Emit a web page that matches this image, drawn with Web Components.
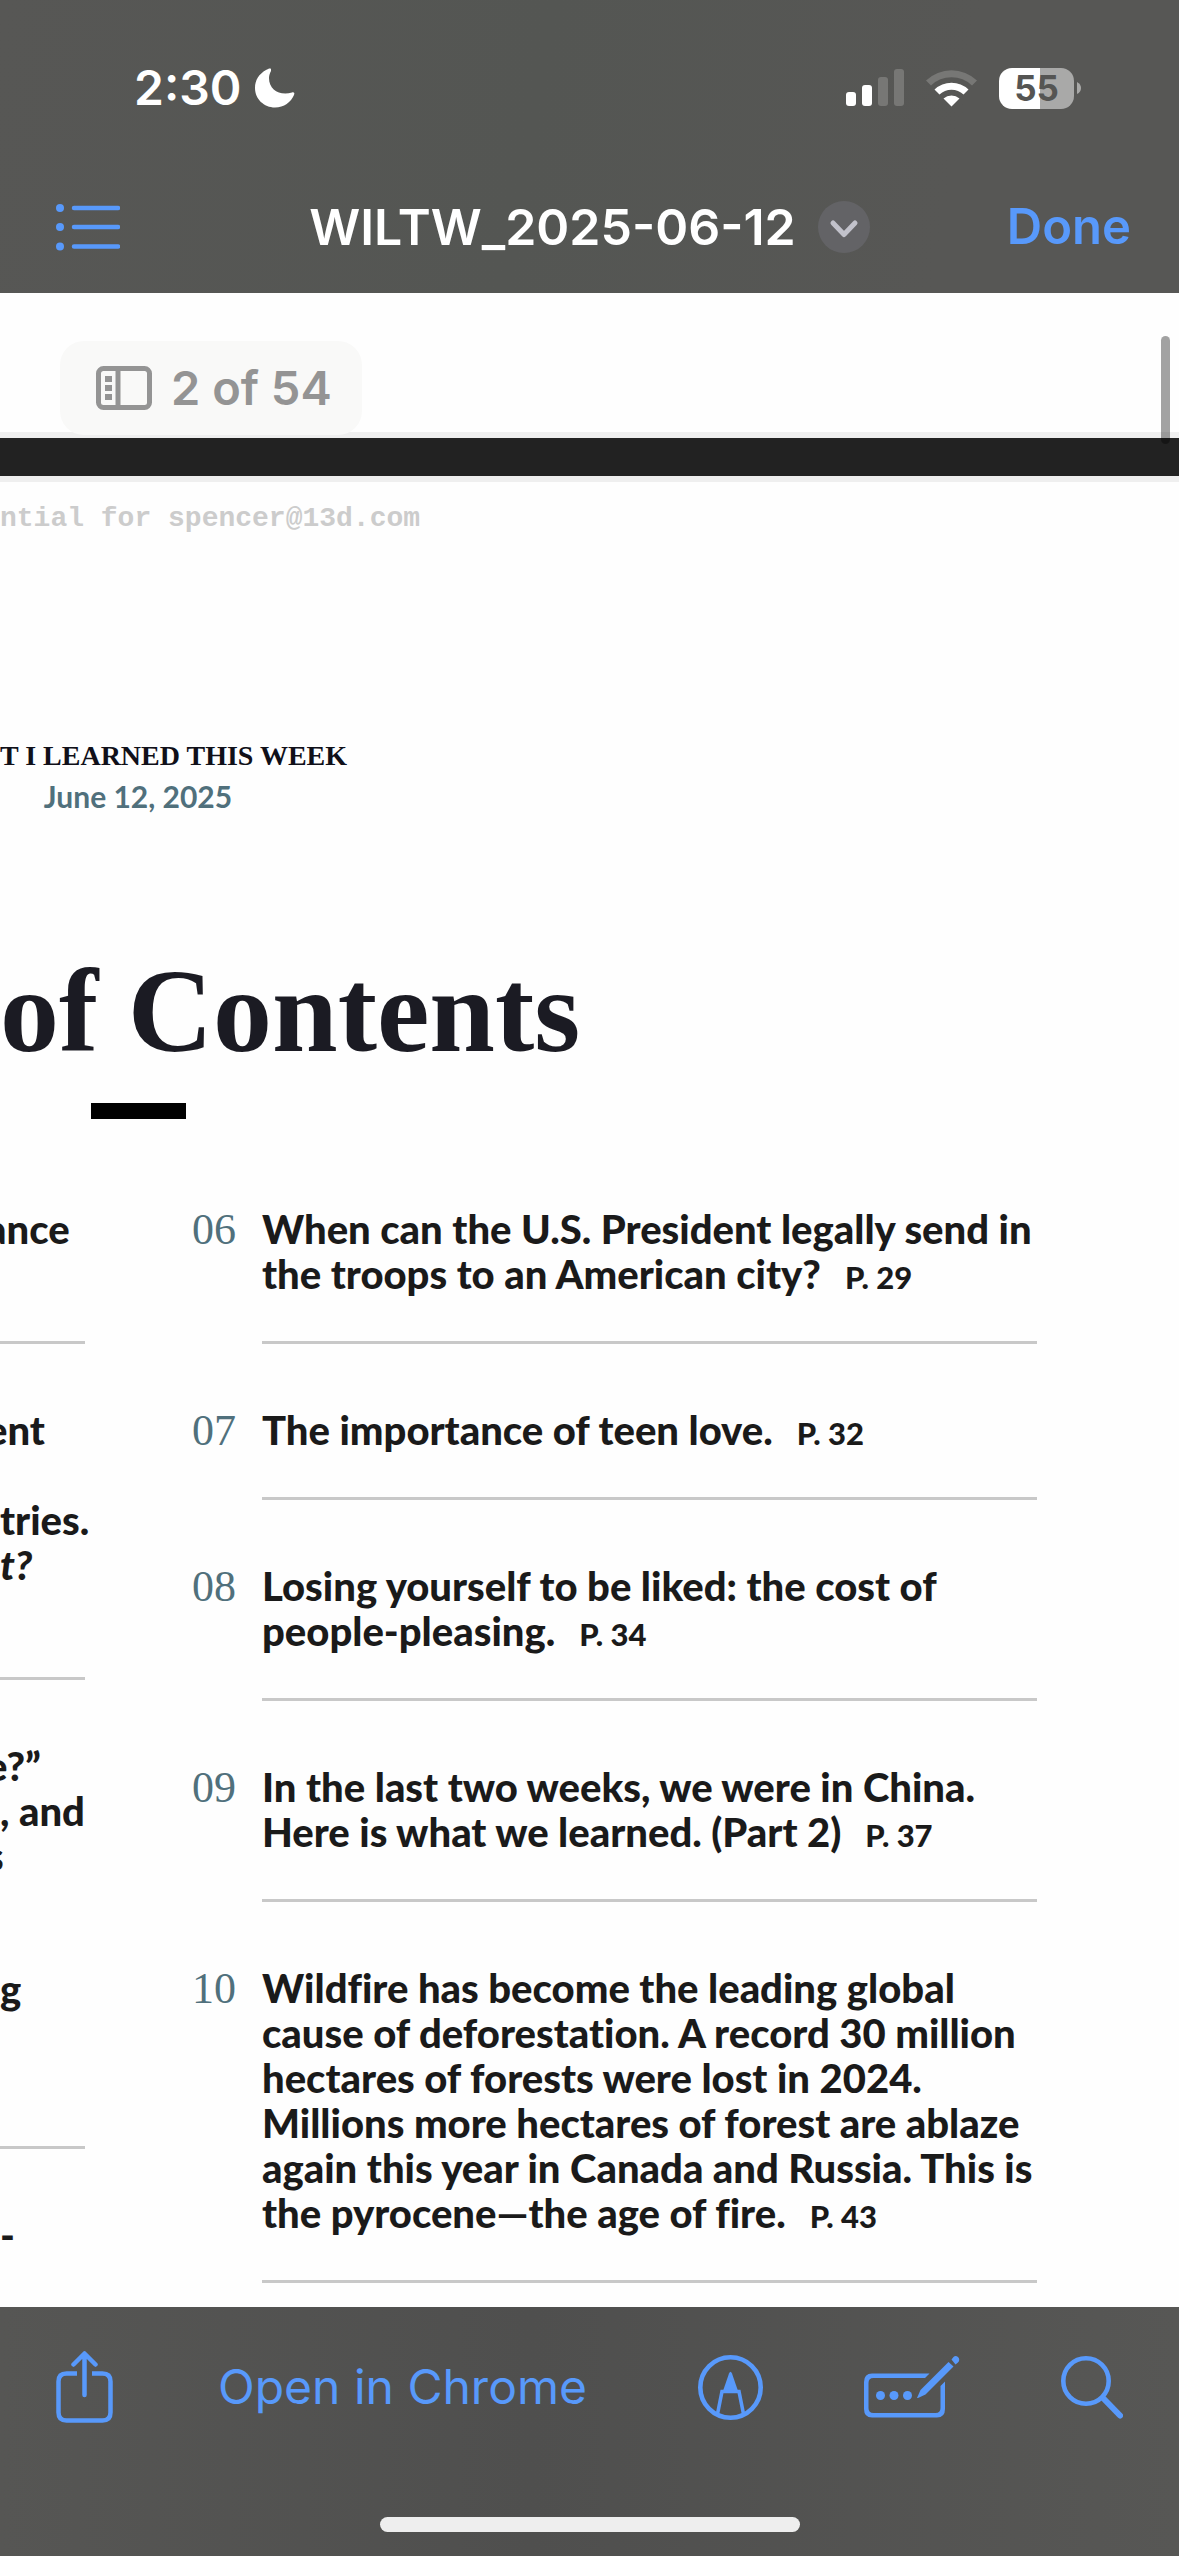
<!DOCTYPE html>
<html lang="en">
<head>
<meta charset="utf-8">
<meta name="viewport" content="width=device-width">
<title>WILTW_2025-06-12</title>
<style>
  html, body { margin: 0; height: 100%; }
  body { font-family: Inter, "Liberation Sans", sans-serif; background: #fff; --tint: #5899fb; }
</style>
</head>
<body>
<pdf-viewer>
  <status-bar slot="top"></status-bar>
  <title-bar slot="top" name="WILTW_2025-06-12"></title-bar>
  <page-badge slot="overlay">2 of 54</page-badge>
  <contents-page>
    <span slot="watermark">ntial for spencer@13d.com</span>
    <span slot="running">T I LEARNED THIS WEEK</span>
    <span slot="date">June 12, 2025</span>
    <span slot="heading">of Contents</span>

    <toc-entry slot="left"><toc-line cut>ance</toc-line><toc-line></toc-line></toc-entry>
    <toc-entry slot="left"><toc-line cut>ent</toc-line><toc-line></toc-line><toc-line>tries.</toc-line><toc-line><i>t?</i></toc-line><toc-line></toc-line></toc-entry>
    <toc-entry slot="left" open><toc-line cut>e?”</toc-line><toc-line>, and</toc-line><toc-line cut>s</toc-line></toc-entry>
    <toc-entry slot="left"><toc-line>g</toc-line><toc-line></toc-line><toc-line></toc-line></toc-entry>
    <toc-entry slot="left"><toc-line>-</toc-line><toc-line></toc-line></toc-entry>

    <toc-entry slot="right" number="06" page="P. 29">When can the U.S. President legally send in<br>the troops to an American city?</toc-entry>
    <toc-entry slot="right" number="07" page="P. 32">The importance of teen love.</toc-entry>
    <toc-entry slot="right" number="08" page="P. 34">Losing yourself to be liked: the cost of<br>people-pleasing.</toc-entry>
    <toc-entry slot="right" number="09" page="P. 37">In the last two weeks, we were in China.<br>Here is what we learned. (Part 2)</toc-entry>
    <toc-entry slot="right" number="10" page="P. 43">Wildfire has become the leading global<br>cause of deforestation. A record 30 million<br>hectares of forests were lost in 2024.<br>Millions more hectares of forest are ablaze<br>again this year in Canada and Russia. This is<br>the pyrocene—the age of fire.</toc-entry>
  </contents-page>
  <tool-bar slot="bottom"></tool-bar>
</pdf-viewer>

<script>
const define = (name, html, setup) => {
  const template = document.createElement('template');
  template.innerHTML = html;
  customElements.define(name, class extends HTMLElement {
    constructor() {
      super();
      this.attachShadow({ mode: 'open' }).append(template.content.cloneNode(true));
    }
    connectedCallback() { if (setup) setup(this, this.shadowRoot); }
  });
};

const buttonReset = `button { appearance: none; border: 0; padding: 0; margin: 0; background: none;
  font: inherit; color: inherit; display: flex; align-items: center; } svg { display: block; }`;

define('pdf-viewer', `
  <style>
    :host { display: flex; flex-direction: column; height: 100vh; overflow: hidden; }
    header { background: linear-gradient(100deg, #575755, #545653 45%, #575755 80%); height: 293px; flex: none; }
    main { position: relative; flex: 1; min-height: 0; overflow: hidden; background: #222; }
    .previous { height: 139px; background: #fefefe; border-bottom: 6px solid #efefef; margin-bottom: 38px; }
    .overlay { position: absolute; left: 60px; top: 48px; }
    .scroll { position: absolute; right: 9px; top: 43px; width: 9px; height: 108px; border-radius: 5px; background: rgba(0,0,0,.36); }
    footer { flex: none; height: 249px; background: linear-gradient(90deg, #565654, #4f4f4e 45%, #575755); }
  </style>
  <header><slot name="top"></slot></header>
  <main>
    <div class="previous"></div>
    <slot></slot>
    <div class="overlay"><slot name="overlay"></slot></div>
    <div class="scroll"></div>
  </main>
  <footer><slot name="bottom"></slot></footer>`);

define('status-bar', `
  <style>
    :host { display: flex; justify-content: space-between; align-items: center; height: 56px; padding: 60px 98px 60px 134px; color: #fff; }
    .left, .right { display: flex; align-items: center; }
    .left { gap: 14px; font-size: 48px; font-weight: 600; line-height: 56px; }
    .right { gap: 22px; }
    svg { display: block; }
    .cell { display: flex; align-items: center; gap: 3px; }
    .battery { width: 75px; height: 41px; border-radius: 13px; display: flex; align-items: center; justify-content: center;
      background: linear-gradient(90deg, #fff 55%, #a9a9a8 55%); color: #555553; font-size: 35px; font-weight: 700; line-height: 41px; }
  </style>
  <div class="left"><span>2:30</span>
    <svg width="40" height="40" viewBox="0 0 40 40"><path d="M16 1C15 0 13 1 11 2C4 6 0 12 0 20C0 31 9 39.500 20 39.500C29 39.500 36 34 39 27C40 25 39 24 37 24.500C25 28 14 22 14 10C14 7 15 5 16 3Z" fill="#fff"/></svg>
  </div>
  <div class="right">
    <svg width="58" height="38" viewBox="0 0 58 38"><g fill="#fff"><rect y="23" width="10" height="14" rx="3"/><rect x="16" y="16" width="10" height="21" rx="3"/></g><g fill="#777775"><rect x="32" y="8" width="10" height="29" rx="3"/><rect x="48" width="10" height="37" rx="3"/></g></svg>
    <svg width="51" height="38" viewBox="0 0 51 38"><path d="M0 11.500A37 37 0 0 1 51 11.500L46 16.500A29.500 29.500 0 0 0 5 16.500Z" fill="#777775"/><path d="M8.500 20.500A25 25 0 0 1 42.500 20.500L37.500 25.500A17.500 17.500 0 0 0 13.500 25.500ZM17.500 29.500A12.500 12.500 0 0 1 33.500 29.500L25.500 37.500Z" fill="#fff"/></svg>
    <div class="cell"><div class="battery">55</div><svg width="4" height="14" viewBox="0 0 4 14"><path d="M0 1Q4 3 4 7T0 13Z" fill="#a9a9a8"/></svg></div>
  </div>`);

define('title-bar', `
  <style>${buttonReset}
    :host { display: grid; grid-template-columns: 1fr auto 1fr; align-items: center; height: 60px; margin-top: 21px; padding: 0 48px; font-size: 50px; font-weight: 600; line-height: 60px; color: #fff; }
    .outline { padding-left: 8px; }
    .title { gap: 22px; }
    .done { justify-self: end; color: var(--tint); font-size: 49px; }
  </style>
  <button class="outline" aria-label="Table of contents"><svg width="64" height="48" viewBox="0 0 64 48"><g fill="#5899fb"><circle cx="4" cy="5" r="4"/><circle cx="4" cy="24" r="4"/><circle cx="4" cy="43.500" r="4"/></g><path d="M18 5H62M18 24H62M18 43.500H62" stroke="#5899fb" stroke-width="4.500" stroke-linecap="round"/></svg></button>
  <button class="title"><span></span><svg width="52" height="52" viewBox="0 0 52 52"><circle cx="26" cy="26" r="26" fill="#636366"/><path d="M15 22L26 33.500L37 22" fill="none" stroke="#c2c2cb" stroke-width="5" stroke-linecap="round" stroke-linejoin="round"/></svg></button>
  <button class="done">Done</button>`,
  (host, root) => { root.querySelector('.title span').textContent = host.getAttribute('name'); });

define('page-badge', `
  <style>${buttonReset}
    :host { display: block; }
    button { height: 94px; padding: 0 30px 0 36px; gap: 19px; border-radius: 24px; background: #f9f9f8; color: #949494; font-size: 47px; font-weight: 600; line-height: 60px; }
  </style>
  <button><svg width="56" height="44" viewBox="0 0 56 44" fill="none" stroke="#949494" stroke-width="5"><rect x="2.500" y="2.500" width="51" height="39" rx="5"/><path d="M22 2V42"/><path d="M9 13H16M9 22H16M9 31H16" stroke-width="6"/></svg><span><slot></slot></span></button>`);

define('contents-page', `
  <style>
    :host { display: block; background: #fefefe; border-top: 6px solid #efefef; padding-top: 20px; height: 1900px; white-space: nowrap; }
    .watermark { font: bold 28px/33px "Liberation Mono", monospace; color: #ccc; }
    .running { margin-top: 205px; font: bold 28px/32px "Liberation Serif", serif; color: #101019; }
    .center { width: 276px; display: flex; flex-direction: column; align-items: center; }
    .date { margin-top: 6px; font: bold 30px/36px Lato, sans-serif; color: #50707c; }
    h1 { margin: 132px 0 25px; font: bold 118px/132px "Liberation Serif", serif; color: #1b1b23; }
    .bar { width: 95px; height: 16px; background: #000; }
    .columns { display: grid; grid-template-columns: 85px 1fr; column-gap: 107px; margin: 88px 142px 0 0; }
    .columns > div { display: flex; flex-direction: column; min-width: 0; }
  </style>
  <div class="watermark"><slot name="watermark"></slot></div>
  <div class="running"><slot name="running"></slot></div>
  <div class="center date"><slot name="date"></slot></div>
  <h1><slot name="heading"></slot></h1>
  <div class="center"><div class="bar"></div></div>
  <div class="columns">
    <div class="left"><slot name="left"></slot></div>
    <div><slot name="right"></slot></div>
  </div>`);

define('toc-line', `
  <style>
    :host { display: block; height: 45px; }
    :host([cut]) { text-indent: -14px; }
  </style><slot></slot>`);

define('toc-entry', `
  <style>
    :host { display: flex; margin-bottom: 64px; font: 900 40px/45px Lato, sans-serif; font-variant-ligatures: none; color: #1a1a1a; }
    :host([open]) { margin-bottom: 44px; }
    :host([open]) .body { border: 0; }
    .number { width: 70px; flex: none; font: 44px/45px "Liberation Serif", serif; color: #50707c; }
    .number:empty { display: none; }
    .body { flex: 1; min-width: 0; padding-bottom: 44px; border-bottom: 3px solid #c8c8c8; }
    .page { margin-left: 24px; font-size: 31px; line-height: 30px; }
    .page:empty { display: none; }
  </style>
  <div class="number"></div><div class="body"><slot></slot><span class="page"></span></div>`,
  (host, root) => {
    root.querySelector('.number').textContent = host.getAttribute('number') || '';
    root.querySelector('.page').textContent = host.getAttribute('page') || '';
  });

define('tool-bar', `
  <style>${buttonReset}
    :host { display: flex; flex-direction: column; justify-content: space-between; align-items: center; height: 225px; padding-bottom: 24px; color: var(--tint); }
    nav { align-self: stretch; display: flex; justify-content: space-between; align-items: center; height: 80px; padding: 40px 56px 0; font-size: 48px; line-height: 60px; }
    .group { display: flex; align-items: center; gap: 101px; }
    .group:first-child { gap: 105px; }
    .home { width: 420px; height: 15px; border-radius: 8px; background: #eee; }
  </style>
  <nav>
    <div class="group">
    <button aria-label="Share"><svg width="57" height="72" viewBox="0 0 57 72" fill="none" stroke="#5899fb" stroke-width="4.500" stroke-linecap="round" stroke-linejoin="round"><path d="M21 22.500H10.500Q2.500 22.500 2.500 30.500V61.500Q2.500 69.500 10.500 69.500H46.500Q54.500 69.500 54.500 61.500V30.500Q54.500 22.500 46.500 22.500H36" stroke-linecap="butt"/><path d="M28.500 44V3M17.500 13.500L28.500 2.500L39.500 13.500"/></svg></button>
    <button>Open in Chrome</button>
    </div>
    <div class="group">
    <button aria-label="Markup"><svg width="65" height="65" viewBox="0 0 65 65"><circle cx="32.500" cy="32.500" r="30.200" fill="none" stroke="#5899fb" stroke-width="4.600"/><path d="M25 36L31 18.500Q32.500 15 34 18.500L40 36Z" fill="#5899fb"/><path d="M19.500 59L24 36.500H41L45.500 59" fill="none" stroke="#5899fb" stroke-width="3.600"/></svg></button>
    <button aria-label="Fill form"><svg width="96" height="64" viewBox="0 0 96 64"><path d="M65.500 18.500L61 23H9.500Q4.500 23 4.500 28V53Q4.500 58 9.500 58H71.500Q76.500 58 76.500 53V31L81 26.500V54Q81 62.500 73 62.500H8Q0 62.500 0 54V27Q0 18.500 8 18.500Z" fill="#5899fb"/><g fill="#5899fb"><circle cx="16.500" cy="40.500" r="4.500"/><circle cx="30" cy="40.500" r="4.500"/><circle cx="43.500" cy="40.500" r="4.500"/><path d="M53 43L56.500 35L84.500 7L89.500 11.500L61.500 39.500L54 43ZM87.500 4.500L89.500 2Q91.500 0 94 2Q96.500 4.500 94 7.500L91.500 9.500Z"/></g></svg></button>
    <button aria-label="Search"><svg width="62" height="64" viewBox="0 0 62 64" fill="none" stroke="#5899fb"><circle cx="25" cy="26" r="22.700" stroke-width="4.600"/><path d="M42 43L59 60.500" stroke-width="6" stroke-linecap="round"/></svg></button>
    </div>
  </nav>
  <div class="home"></div>`);
</script>
</body>
</html>
